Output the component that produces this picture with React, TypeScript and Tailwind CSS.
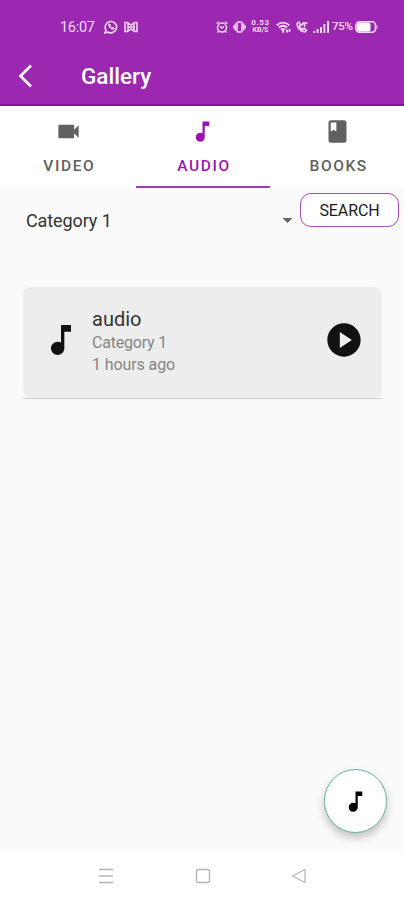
import React, { useState } from 'react';

const ICONS = {
  video: 'M17 10.5V7c0-.55-.45-1-1-1H4c-.55 0-1 .45-1 1v10c0 .55.45 1 1 1h12c.55 0 1-.45 1-1v-3.5l4 4v-11l-4 4z',
  audio: 'M12 3v10.55c-.59-.34-1.27-.55-2-.55-2.21 0-4 1.79-4 4s1.79 4 4 4 4-1.79 4-4V7h4V3h-6z',
  books: 'M18 2H6c-1.1 0-2 .9-2 2v16c0 1.1.9 2 2 2h12c1.1 0 2-.9 2-2V4c0-1.1-.9-2-2-2zM6 4h5v8l-2.5-1.5L6 12V4z',
  play: 'M12 2C6.48 2 2 6.48 2 12s4.48 10 10 10 10-4.48 10-10S17.52 2 12 2zm-2.5 14.8V7.2l7.2 4.8-7.2 4.8z',
};

type IconName = keyof typeof ICONS;

interface IconProps {
  name: IconName;
  className?: string;
}

const Icon: React.FC<IconProps> = ({ name, className }) => (
  <svg viewBox="0 0 24 24" fill="currentColor" className={className}>
    <path d={ICONS[name]} />
  </svg>
);

const StatusBar = () => (
  <div className="flex h-[53px] items-center pl-[60px] text-[#f3dcf6]">
    <span className="w-[44px] pt-[3px] text-[14.5px] leading-none tracking-[-0.3px]">16:07</span>
    {/* WhatsApp */}
    <svg viewBox="0 0 14 14" className="h-[14px] w-[14px]" fill="none" stroke="currentColor" strokeWidth="1.6">
      <path d="M1 13l.9-3A5.7 5.7 0 1 1 4 12.1z" />
      <path d="M4.7 4.2c-.9 1.3 2.3 5.2 4.6 5.1.7 0 1.1-.7 1-1.1l-1.5-.8-.8.7c-.8-.3-1.5-1-1.9-1.8l.6-.7-.7-1.5z" fill="currentColor" strokeWidth=".8" />
    </svg>
    <svg viewBox="0 0 14 12" className="ml-[6px] h-[12px] w-[14px]" fill="none" stroke="currentColor" strokeWidth="1.5">
      <path d="M1 1.500h2.500L7 4l3.500-2.500H13v9h-2.500L7 8l-3.500 2.500H1zM4 2v8M10 2v8M4 6h6" />
    </svg>
    {/* Alarm */}
    <svg viewBox="0 0 12 12" className="ml-[78px] h-[12px] w-[12px]" fill="none" stroke="currentColor" strokeWidth="1.5">
      <circle cx="6" cy="6.6" r="4.5" />
      <path d="M.7 2.6L3 .8M11.3 2.6L9 .8M4 5.200l2 1.800 2-1.500M2.500 10.500l-1 1M9.500 10.500l1 1" />
    </svg>
    {/* Vibrate */}
    <svg viewBox="0 0 13 12" className="ml-[5px] h-[12px] w-[13px]" fill="none" stroke="currentColor" strokeWidth="1.5">
      <rect x="4" y="1" width="5" height="10" rx="1" />
      <path d="M2.300 2.500v7M10.700 2.500v7M.6 4.500v3M12.400 4.500v3" />
    </svg>
    <div className="ml-[5px] flex w-[19px] flex-col items-center gap-px font-bold">
      <span className="h-[7px] text-[8px] leading-[7px] tracking-[0.6px]">0.53</span>
      <span className="h-[7px] text-[7px] leading-[7px]">KB/S</span>
    </div>
    {/* Wi-Fi */}
    <svg viewBox="0 0 15 12" className="ml-[6px] h-[12px] w-[15px]" fill="none" stroke="currentColor" strokeWidth="1.8">
      <path d="M.7 4.200Q7 -1 13.300 4.200M2.800 6.500Q7 3 11.200 6.500M4.900 8.700Q7 7 9.100 8.700" />
      <path d="M7 9v3M11 8.500v3M13.500 8v3" />
    </svg>
    {/* Call over Wi-Fi */}
    <svg viewBox="0 0 12 12" className="ml-[5px] h-[12px] w-[12px]" fill="none" stroke="currentColor" strokeWidth="1.6">
      <path d="M2.800 1L1 2.500c0 4 3.500 8.500 8 8.500l1.500-1.800-2.200-1.700-1.500 1C5.300 7.800 4 6.400 3.500 5l1-1.300z" />
      <path d="M5.500 4.500l2-3M7 2h4.500M8.500 2v4" />
    </svg>
    <svg viewBox="0 0 16 13" className="ml-[5px] h-[13px] w-[16px]" fill="currentColor">
      <path d="M0 11h2v2H0zM3.500 9h2v4h-2zM7 7h2v6H7zM10.500 4h1.800v9h-1.800zM14 1h2v12h-2z" />
    </svg>
    <span className="ml-[3px] w-[23px] pt-px text-[11.5px] font-medium leading-none tracking-[-0.3px]">75%</span>
    <svg viewBox="0 0 24 12" className="h-[12px] w-[24px]">
      <rect x="1" y=".8" width="19.5" height="10.4" rx="3.5" fill="none" stroke="currentColor" strokeWidth="1.6" />
      <rect x="2" y="1.5" width="13.5" height="9" rx="2.5" fill="white" />
      <path d="M21.500 3.500q2 2.500 0 5z" fill="currentColor" />
    </svg>
  </div>
);

const TABS: { name: IconName; label: string }[] = [
  { name: 'video', label: 'VIDEO' },
  { name: 'audio', label: 'AUDIO' },
  { name: 'books', label: 'BOOKS' },
];

const Header = () => (
  <header className="h-[106px] border-b-2 border-[#8f12a6] bg-[#9c27b0]">
    <StatusBar />
    <div className="flex h-[46px] items-center pl-[18px]">
      <svg viewBox="0 0 15 24" className="h-[24px] w-[15px] text-white" fill="none" stroke="currentColor" strokeWidth="2.6">
        <path d="M13 1.500L2.500 12 13 22.500" />
      </svg>
      <h1 className="ml-[48px] text-[22.5px] font-medium leading-none text-white">Gallery</h1>
    </div>
  </header>
);

export default function App() {
  const [activeTab, setActiveTab] = useState<IconName>('audio');

  return (
    <div className="flex h-[900px] w-[404px] flex-col overflow-hidden bg-[#fafafa] font-[Roboto,sans-serif]">
      <Header />

      <nav className="-mr-px grid h-[82px] grid-cols-3 bg-white pl-px">
        {TABS.map((tab) => (
          <button
            key={tab.name}
            onClick={() => setActiveTab(tab.name)}
            className={`flex flex-col items-center border-b-2 pt-3 ${
              activeTab === tab.name ? 'border-[#a23bb5] text-[#9c14b0]' : 'border-transparent text-[#606060]'
            }`}
          >
            <Icon name={tab.name} className="h-[27px] w-[27px]" />
            <span className="mt-[12px] pl-[2px] text-[15.5px] font-medium leading-[18px] tracking-[1.6px]">{tab.label}</span>
          </button>
        ))}
      </nav>

      <main className="flex flex-1 flex-col">
        <div className="flex items-start pt-[5px] pr-[5px]">
          <button className="flex h-[54px] flex-1 items-center justify-between pl-[26px] pr-[7px]">
            <span className="text-[18px] tracking-[-0.1px] text-[#333]">Category 1</span>
            <svg viewBox="0 0 10 5" className="h-[5px] w-[11px] text-[#666]" fill="currentColor">
              <path d="M0 0h10L5 5z" />
            </svg>
          </button>
          <button className="h-[34px] w-[99px] rounded-[11px] border border-[#a84cba] bg-white pt-[2px] text-[16px] tracking-[-0.1px] text-[#1c1c1c]">
            SEARCH
          </button>
        </div>

        <div className="mr-[22px] ml-[23px] mt-[40px] border-b border-[#cfcfcf]">
          <div className="flex h-[111px] items-center rounded-lg bg-[#ededed] pr-[18px] pb-[6px] pl-[18px]">
            <Icon name="audio" className="h-10 w-10 text-[#111]" />
            <div className="ml-[11px] flex-1 pt-[4px]">
              <p className="text-[20px] leading-[23px] text-[#333]">audio</p>
              <p className="text-[16px] leading-[23px] tracking-[-0.2px] text-[#858585]">Category 1</p>
              <p className="text-[16px] leading-[21px] tracking-[-0.1px] text-[#858585]">1 hours ago</p>
            </div>
            <Icon name="play" className="h-10 w-10 text-[#111]" />
          </div>
        </div>

        <button className="mr-[17px] mb-[18px] mt-auto flex h-[64px] w-[63px] items-center justify-center self-end rounded-full border border-[#62b09f] bg-white text-black shadow-[0_5px_8px_rgba(0,0,0,0.22)]">
          <Icon name="audio" className="h-[27px] w-[27px]" />
        </button>
      </main>

      <footer className="flex h-[49px] items-center justify-between bg-white pl-[98px] pr-[97px] text-[#b5b5b5]">
        <svg viewBox="0 0 16 16" className="h-4 w-4" fill="none" stroke="currentColor" strokeWidth="1.3">
          <path d="M1 1.500h14M1 8h14M1 14.500h14" />
        </svg>
        <svg viewBox="0 0 16 16" className="h-4 w-4" fill="none" stroke="currentColor" strokeWidth="1.4">
          <rect x="1.5" y="1.5" width="13" height="13" rx="2" />
        </svg>
        <svg viewBox="0 0 16 16" className="h-4 w-4" fill="none" stroke="currentColor" strokeWidth="1.2" strokeLinejoin="round">
          <path d="M1.500 8l12.500-6.500v13z" />
        </svg>
      </footer>
    </div>
  );
}
